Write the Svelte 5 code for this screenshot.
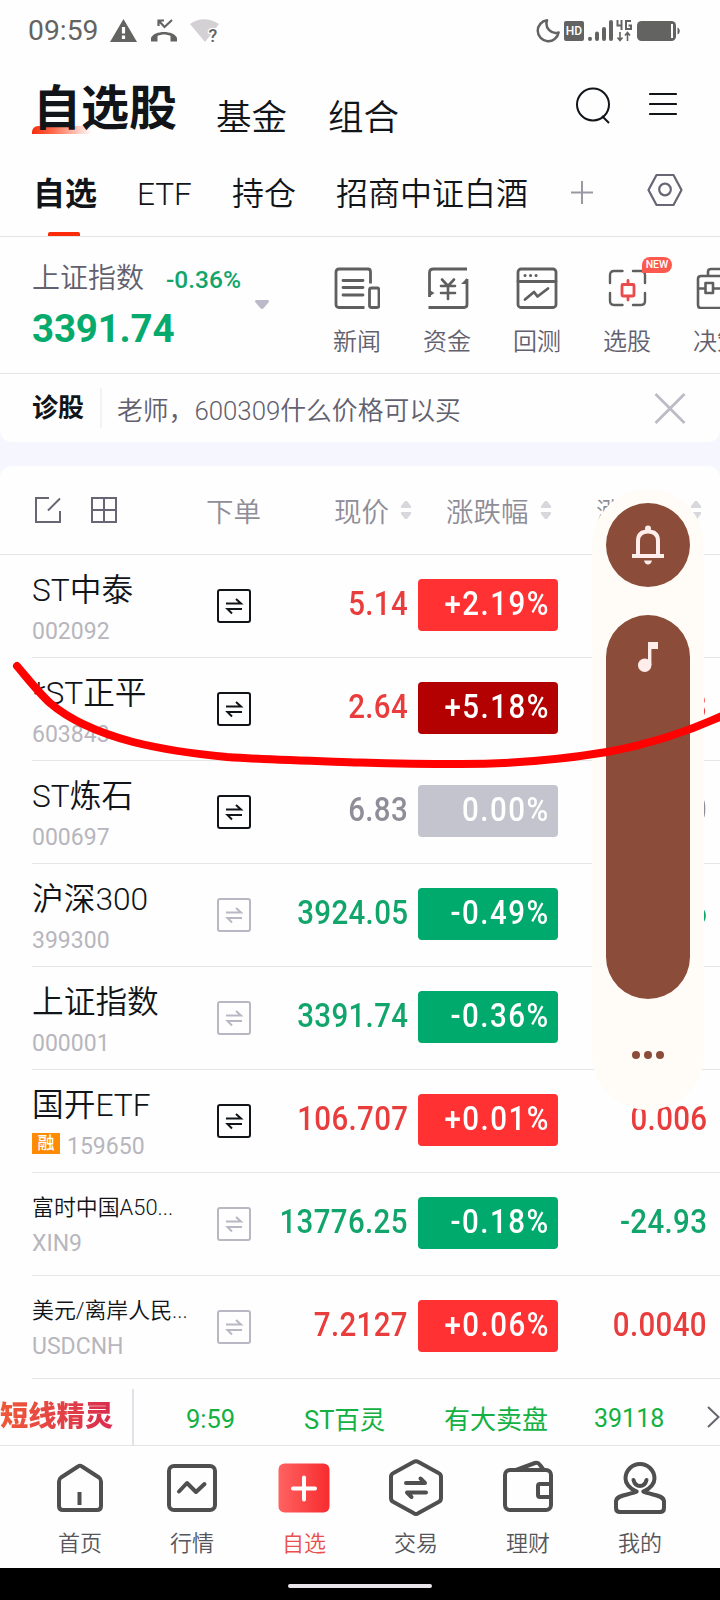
<script lang="ts">
	type Trend = 'up' | 'down' | 'flat' | 'surge';

	interface Stock {
		name: string;
		code: string;
		price: string;
		percent: string;
		change: string;
		trend: Trend;
		tradable: boolean;
		margin?: boolean;
		small?: boolean;
	}

	const stocks: Stock[] = [
		{ name: 'ST中泰', code: '002092', price: '5.14', percent: '+2.19%', change: '0.11', trend: 'up', tradable: true },
		{ name: '*ST正平', code: '603843', price: '2.64', percent: '+5.18%', change: '0.13', trend: 'surge', tradable: true },
		{ name: 'ST炼石', code: '000697', price: '6.83', percent: '0.00%', change: '0.00', trend: 'flat', tradable: true },
		{ name: '沪深300', code: '399300', price: '3924.05', percent: '-0.49%', change: '-19.36', trend: 'down', tradable: false },
		{ name: '上证指数', code: '000001', price: '3391.74', percent: '-0.36%', change: '-12.21', trend: 'down', tradable: false },
		{ name: '国开ETF', code: '159650', price: '106.707', percent: '+0.01%', change: '0.006', trend: 'up', tradable: true, margin: true },
		{ name: '富时中国A50...', code: 'XIN9', price: '13776.25', percent: '-0.18%', change: '-24.93', trend: 'down', tradable: false, small: true },
		{ name: '美元/离岸人民...', code: 'USDCNH', price: '7.2127', percent: '+0.06%', change: '0.0040', trend: 'up', tradable: false, small: true }
	];

	const tools = [
		{ id: 'news', label: '新闻' },
		{ id: 'funds', label: '资金' },
		{ id: 'backtest', label: '回测' },
		{ id: 'picker', label: '选股' },
		{ id: 'decision', label: '决策' }
	];

	const navItems = [
		{ id: 'home', label: '首页' },
		{ id: 'market', label: '行情' },
		{ id: 'watch', label: '自选' },
		{ id: 'trade', label: '交易' },
		{ id: 'wealth', label: '理财' },
		{ id: 'mine', label: '我的' }
	];

	let active = $state('watch');
</script>

{#snippet sorter()}
	<svg class="sorter" width="10" height="18" viewBox="0 0 10 18">
		<path d="M4 0h2l4 5v2H0V5zM0 11h10v2l-4 5H4l-4-5z" fill="#d8d8dc" />
	</svg>
{/snippet}

<div class="screen">
	<div class="status-bar">
		<span class="clock">09:59</span>
		<svg class="warn" width="27" height="23" viewBox="0 0 27 23">
			<path d="M13.5 0 27 23H0z" fill="#636462" />
			<path d="M13.5 8v6.500M13.500 16.500v3.500" stroke="#fff" stroke-width="3.200" />
		</svg>
		<svg class="missed" width="26" height="23" viewBox="0 0 26 23" fill="none" stroke="#636462">
			<path d="M7.500 7V1.500H13M8 2l5.500 6L21 1" stroke-width="2.200" />
			<path d="M0 19c3-8 23-8 26 0v3.500h-6.500V17c-4-2-9-2-13 0v5.500H0z" fill="#636462" stroke="none" />
		</svg>
		<svg class="wifi" width="30" height="24" viewBox="0 0 30 24">
			<path d="M0 5C8-1.500 20-1.500 29 5L15 23z" fill="#d3d1d4" />
			<text x="18.500" y="22.500" font-size="18" font-weight="500" fill="#636462" stroke="#fff" stroke-width="2.500" paint-order="stroke">?</text>
		</svg>
		<span class="spacer"></span>
		<svg class="moon" width="24" height="24" viewBox="0 0 24 24">
			<path d="M11 1.300A10.500 10.500 0 1 0 22.600 13.500C15.500 16 8.500 9 11 1.300z" fill="none" stroke="#636462" stroke-width="2.500" stroke-linejoin="round" />
		</svg>
		<span class="hd">HD</span>
		<svg class="signal" width="25" height="21" viewBox="0 0 25 21" stroke="#636462" stroke-width="4" stroke-linecap="round">
			<path d="M2 18.800v.2M9 13.500V19M16 9v10M23 2v17" />
		</svg>
		<svg class="lte" width="16" height="22" viewBox="0 0 16 22" fill="none" stroke="#636462" stroke-width="2">
			<path d="M1.500 0v5.500h5M5.500 0v10M15 1h-5v8h5V5.500h-2.500" />
			<path d="M4 12v8M1.500 17.500 4 20.500l2.500-3M11.500 21v-8M9 15.500l2.500-3 2.500 3" stroke-width="1.600" />
		</svg>
		<svg class="battery" width="43" height="20" viewBox="0 0 43 20">
			<rect x="0" y="0" width="39" height="20" rx="4.500" fill="#636462" />
			<rect x="34" y="3" width="2" height="14" fill="#fff" />
			<path d="M40.500 6.500c3 1 3 6 0 7z" fill="#636462" />
		</svg>
	</div>

	<header class="top-tabs">
		<h1>自选股</h1>
		<span class="fund">基金</span>
		<span class="combo">组合</span>
		<span class="spacer"></span>
		<svg class="search" width="36" height="38" viewBox="0 0 36 38" fill="none" stroke="#111418" stroke-width="2">
			<circle cx="17" cy="17.500" r="16" />
			<path d="m26 29 7 7" />
		</svg>
		<svg class="menu" width="28" height="24" viewBox="0 0 28 24" stroke="#111418" stroke-width="2.200" stroke-linecap="round">
			<path d="M1 2h26M1 12h26M1 22h26" />
		</svg>
	</header>

	<nav class="groups">
		<span class="group selected">自选</span>
		<span class="group etf">ETF</span>
		<span class="group hold">持仓</span>
		<span class="group">招商中证白酒</span>
		<svg class="plus" width="22" height="23" viewBox="0 0 22 23" stroke="#9b98a3" stroke-width="2">
			<path d="M0 11.500h22M11 0v23" />
		</svg>
		<svg class="settings" width="36" height="34" viewBox="0 0 36 34" fill="none" stroke="#686675" stroke-width="2.200" stroke-linejoin="round">
			<path d="M9.500 2h17L34.500 17l-8 15h-17L1.500 17z" />
			<circle cx="18" cy="16.500" r="5.800" />
		</svg>
	</nav>

	<section class="market">
		<div class="index">
			<div class="index-head">
				<span class="index-name">上证指数</span>
				<span class="index-percent">-0.36%</span>
			</div>
			<div class="index-value">3391.74</div>
		</div>
		<svg class="caret" width="14" height="9" viewBox="0 0 14 9"><path d="M1 0h12q2 1 0 3L8.500 8.300q-1.500 1.200-3 0L1 3Q-1 1 1 0z" fill="#bcb9c8" /></svg>
		<div class="tools">
			{#each tools as tool (tool.id)}
				<div class="tool">
					<svg width="46" height="42" viewBox="0 0 46 42" fill="none" stroke="#5f5f5f" stroke-width="2.800" stroke-linecap="round" stroke-linejoin="round">
						{#if tool.id === 'news'}
							<path d="M30.500 40.500H5q-3 0-3-3V5q0-3 3-3h29q2.500 0 2.500 3v11.500" stroke-linecap="butt" />
							<path d="M9 13.500h20M9 20.500h20M9 28h20" />
							<rect x="35.500" y="21" width="9.500" height="19.500" rx="2" />
						{:else if tool.id === 'funds'}
							<path d="M43 2H9.500Q5.500 2 5.500 6v24M4.500 40.500H40q3 0 3-3V12" stroke-linecap="butt" />
							<path d="M5.500 29v-6l5 3-6 4zM43 11v6h-6z" fill="#5f5f5f" stroke="none" />
							<path d="m18 12.500 6 6.500 6-6.500M17 19h14M17 26h14M24 19v13" stroke-width="2.600" />
						{:else if tool.id === 'backtest'}
							<rect x="4" y="2" width="38" height="38.500" rx="3" />
							<path d="M4 14.500h38M11 32.500l9-7.500 3.500 4.500 10.500-8" />
							<path d="M11 8.500h.1M16.500 8.500h.1M22 8.500h.1" stroke-width="3" />
						{:else if tool.id === 'picker'}
							<path d="M6 16V8q0-4 4-4h8.500M29 4h8q4 0 4 4v8M41 26v8q0 4-4 4h-8M18.500 38H10q-4 0-4-4v-8" stroke-width="2.400" />
							<path d="M24 13.500v4M24 29v4M19 17.500h10q1 0 1 1v9.500q0 1-1 1H19q-1 0-1-1v-9.500q0-1 1-1z" stroke="#ea4a49" />
						{:else}
							<path d="M46 9H7Q4 9 4 12v26q0 3 3 3h39M4 21.500h7.500M19 21.500h16M11.500 16H19v10h-7.500zM14 8.500V5q0-3 3-3h28" stroke-width="2.600" />
						{/if}
					</svg>
					<span>{tool.label}</span>
					{#if tool.id === 'picker'}<b class="new">NEW</b>{/if}
				</div>
			{/each}
		</div>
	</section>

	<section class="ask">
		<strong>诊股</strong>
		<span class="question">老师，600309什么价格可以买</span>
		<svg class="close" width="32" height="31" viewBox="0 0 32 31" stroke="#bcbbc6" stroke-width="2.800">
			<path d="m1.500 1 29 29M30.500 1l-29 29" />
		</svg>
	</section>

	<main class="quotes">
		<div class="quotes-head">
			<div class="head-icons">
				<svg width="26" height="26" viewBox="0 0 26 26" fill="none" stroke="#686675" stroke-width="2">
					<path d="M14 1H1v24h24V14M13 13.500 25 1.500" />
				</svg>
				<svg width="26" height="26" viewBox="0 0 26 26" fill="none" stroke="#686675" stroke-width="2">
					<path d="M1 1h24v24H1zM1 13h24M13 1v24" />
				</svg>
			</div>
			<span class="head-order">下单</span>
			<span class="head-price">现价{@render sorter()}</span>
			<span class="head-percent">涨跌幅{@render sorter()}</span>
			<span class="head-change">涨跌额{@render sorter()}</span>
		</div>

		{#each stocks as stock (stock.code)}
			<div class="row {stock.trend}">
				<div class="ident">
					<div class="name" class:small={stock.small}>{stock.name}</div>
					<div class="code">
						{#if stock.margin}<i class="margin">融</i>{/if}<span>{stock.code}</span>
					</div>
				</div>
				<svg class="swap" class:muted={!stock.tradable} width="34" height="34" viewBox="0 0 34 34" fill="none" stroke="currentColor" stroke-width="2">
					<rect x="1" y="1" width="32" height="32" rx="2" />
					<path d="M9 14.500h15l-5-4.500M25 20H10.500l4.500 4.500" />
				</svg>
				<div class="price"><span class="num">{stock.price}</span></div>
				<div class="percent"><span class="num">{stock.percent}</span></div>
				<div class="change"><span class="num">{stock.change}</span></div>
			</div>
		{/each}
	</main>

	<section class="ticker">
		<div class="ticker-title"><span>短线精灵</span></div>
		<span class="ticker-time">9:59</span>
		<span class="ticker-name">ST百灵</span>
		<span class="ticker-event">有大卖盘</span>
		<span class="ticker-amount">39118</span>
		<svg class="more" width="13" height="22" viewBox="0 0 13 22" fill="none" stroke="#67656e" stroke-width="2">
			<path d="m1 1 10.500 10L1 21" />
		</svg>
	</section>

	<nav class="bottom-nav">
		{#each navItems as item (item.id)}
			<button class:active={item.id === active} onclick={() => (active = item.id)}>
				<svg width="58" height="60" viewBox="0 0 58 60" fill="none" stroke="#4f4f4f" stroke-width="4" stroke-linejoin="round" stroke-linecap="round">
					{#if item.id === 'home'}
						<path d="M27 8.500q2-1.500 4 0l17 11q2 1.500 2 4V48q0 4-4 4H12q-4 0-4-4V23.500q0-2.500 2-4z" />
						<path d="M28.500 34v13" stroke-linecap="butt" />
					{:else if item.id === 'market'}
						<rect x="6" y="8" width="46" height="44" rx="5" />
						<path d="m16 33.500 8-8.500 9 9 8.500-8" />
					{:else if item.id === 'watch'}
						<defs>
							<linearGradient id="watch-fill"><stop offset="0" stop-color="#ff6261" /><stop offset="1" stop-color="#f72c2f" /></linearGradient>
						</defs>
						<rect x="3.500" y="5.500" width="51" height="49" rx="6" fill="url(#watch-fill)" stroke="none" />
						<path d="M18 30.500h22M29 19.500v22" stroke="#fff" />
					{:else if item.id === 'trade'}
						<path d="M26.500 4q2.500-1.500 5 0l20 11q2.500 1 2.500 4v21q0 3-2.500 4l-20 11q-2.500 2-5 0l-20-11Q4 43 4 40V19q0-3 2.500-4z" />
						<path d="M19 25h19l-4.500-4.500M39 34.500H20l4.500 4.500" />
					{:else if item.id === 'wealth'}
						<rect x="6" y="12" width="46" height="40" rx="5" />
						<path d="M52 26H41q-2 0-2 2v9q0 2 2 2h11M17 12l19-7q3-1 5 2l3 4" />
					{:else}
						<path d="M25.500 33.500C18 30.500 14.500 25 14.500 20.500a14.500 14.500 0 0 1 29 0c0 4.500-3.500 10-11 13" />
						<path d="M25.500 33.500C19 37 5 36.500 5 43.500V50q0 4 4 4h40q4 0 4-4v-6.500c0-7-14-6.500-20.500-10" />
						<path d="M22.500 22c2 8 11 8 13 0" />
					{/if}
				</svg>
				<span>{item.label}</span>
			</button>
		{/each}
	</nav>

	<div class="gesture-bar"><i></i></div>

	<aside class="volume">
		<div class="ring">
			<svg width="32" height="40" viewBox="0 0 32 40" fill="#ffedeb">
				<path d="M6 30V16q0-9.500 10-9.500T26 16v14" fill="none" stroke="#ffedeb" stroke-width="4" />
				<circle cx="16" cy="3.500" r="3" />
				<path d="M0 29h32v4H0zM12 35.500h8q-1 4-4 4t-4-4z" />
			</svg>
		</div>
		<div class="slider">
			<svg width="20" height="30" viewBox="0 0 20 30" fill="#ffedeb">
				<circle cx="6.700" cy="23.300" r="6.700" />
				<path d="M10 0h10v7h-6.600v16H10z" />
			</svg>
		</div>
		<div class="dots"><i></i><i></i><i></i></div>
	</aside>

	<svg class="stroke" width="720" height="130" viewBox="0 0 720 130">
		<path d="M17 16C28 29 39 43 50 53C72 72 103 84 133 92C165 100 195 104 227 107C270 110 315 111 360 112.500C395 113.500 425 114 460 114C520 114 565 109 607 102C650 94 687 82 724 65" fill="none" stroke="#ff0101" stroke-width="8" stroke-linecap="round" />
	</svg>
</div>

<style>
	:global(body) {
		background: #fff;
	}

	.screen {
		position: relative;
		width: 720px;
		height: 1600px;
		overflow: hidden;
		background: #fefefe;
		color: #111418;
		font-family: Roboto, 'Noto Sans CJK SC', sans-serif;
		white-space: nowrap;
	}

	.screen * {
		box-sizing: border-box;
	}

	svg {
		display: block;
		flex: none;
	}

	.spacer {
		flex: 1;
	}

	.status-bar {
		display: flex;
		align-items: center;
		height: 61px;
		padding: 0 40px 0 28px;
		color: #636462;
	}

	.clock {
		width: 82px;
		font-size: 28.300px;
		line-height: 60px;
	}

	.missed {
		margin-left: 14px;
	}

	.wifi {
		margin-left: 13px;
		overflow: visible;
	}

	.hd {
		width: 20px;
		margin: 0 4px;
		border-radius: 2px;
		background: #636462;
		color: #fff;
		font-size: 12px;
		font-weight: 500;
		line-height: 20px;
		text-align: center;
	}

	.lte {
		margin: 0 5px 0 3px;
	}

	.top-tabs {
		display: flex;
		align-items: center;
		height: 96px;
		padding: 0 42px 0 33px;
	}

	h1 {
		position: relative;
		z-index: 0;
		width: 183px;
		margin: 0;
		font-size: 48px;
		font-weight: 700;
		line-height: 96px;
	}

	h1::after {
		content: '';
		position: absolute;
		z-index: -1;
		left: -1px;
		top: 65px;
		width: 60px;
		height: 8px;
		border-radius: 6px 0 0;
		background: linear-gradient(90deg, #f72c0c, #ff6a4c 35%, #fff);
	}

	.fund,
	.combo {
		margin-top: 17px;
		font-size: 35.500px;
		font-weight: 350;
		line-height: 40px;
	}

	.combo {
		margin-left: 41px;
	}

	.search {
		margin: -7px 37px 0 0;
	}

	.menu {
		margin: -10px 1px 0 0;
	}

	.groups {
		display: flex;
		align-items: center;
		height: 80px;
		padding: 0 37px 5px 33px;
		border-bottom: 1px solid #e4e4e6;
	}

	.group {
		font-size: 32px;
		font-weight: 350;
		line-height: 75px;
	}

	.group.selected {
		position: relative;
		width: 64px;
		margin-right: 40px;
		font-weight: 700;
	}

	.selected::after {
		content: '';
		position: absolute;
		left: 15px;
		bottom: -4px;
		width: 32px;
		height: 4px;
		border-radius: 2px 2px 0 0;
		background: #fa2c0a;
	}

	.etf {
		width: 95px;
		font-size: 31.500px;
	}

	.hold {
		margin-right: 40px;
	}

	.plus {
		margin: -3px 0 0 43px;
	}

	.settings {
		margin: -8px 0 0 auto;
	}

	.market {
		display: flex;
		height: 137px;
		border-bottom: 1px solid #e4e4e6;
	}

	.index {
		flex: none;
		width: 255px;
		padding: 22px 0 0 32px;
	}

	.index-head {
		display: flex;
		align-items: center;
		height: 40px;
	}

	.index-name {
		width: 134px;
		color: #62606e;
		font-size: 28px;
		font-weight: 350;
		line-height: 36px;
	}

	.index-percent {
		color: #12a56b;
		font-size: 24.500px;
		font-weight: 500;
	}

	.index-value {
		color: #05aa6c;
		font-size: 38.500px;
		font-weight: 700;
		letter-spacing: -0.2px;
		line-height: 60px;
	}

	.caret {
		margin-top: 63px;
	}

	.tools {
		display: flex;
		margin-left: 43px;
	}

	.tool {
		position: relative;
		width: 90px;
		flex: none;
		padding-top: 30px;
	}

	.tool svg {
		margin: 0 auto;
	}

	.tool span {
		display: block;
		margin-top: 13px;
		color: #62606e;
		font-size: 24px;
		font-weight: 350;
		line-height: 40px;
		text-align: center;
	}

	.new {
		position: absolute;
		left: 60px;
		top: 20px;
		width: 30px;
		border-radius: 8px 8px 8px 1px;
		background: #fc594f;
		color: #fff;
		font-size: 10.500px;
		font-weight: 500;
		line-height: 16px;
		text-align: center;
	}

	.ask {
		position: relative;
		z-index: 1;
		display: flex;
		align-items: center;
		height: 68px;
		padding: 0 34px 0 32px;
		border-radius: 0 0 12px 12px;
		background: #fefefe;
		box-shadow: 0 12px 0 #f6f6fe;
	}

	.ask strong {
		width: 70px;
		border-right: 2px solid #f6f1f4;
		font-size: 26px;
		font-weight: 700;
		line-height: 40px;
	}

	.question {
		margin-left: 15px;
		color: #62606e;
		font-size: 25.800px;
		font-weight: 350;
	}

	.close {
		margin-left: auto;
	}

	.quotes {
		position: relative;
		margin-top: 24px;
		border-radius: 12px 12px 0 0;
		background: #fefefe;
		box-shadow: 0 -12px 0 12px #f6f6fe, 0 -24px 0 12px #f6f6fe;
		clip-path: inset(-24px 0 0);
	}

	.quotes-head {
		display: flex;
		align-items: center;
		height: 89px;
		padding-left: 35px;
		border-bottom: 1px solid #e4e4e6;
		color: #8f8d98;
		font-size: 27.500px;
		font-weight: 350;
	}

	.quotes-head span {
		display: flex;
		align-items: center;
	}

	.head-icons {
		display: flex;
		gap: 30px;
		width: 171px;
	}

	.head-order {
		width: 128px;
	}

	.head-price {
		width: 112px;
	}

	.head-percent {
		width: 150px;
	}

	.head-change {
		width: 105px;
		justify-content: space-between;
	}

	.sorter {
		margin-left: 12px;
	}

	.head-change .sorter {
		margin-left: 0;
	}

	.row {
		display: flex;
		align-items: center;
		height: 103px;
		margin-left: 32px;
		border-bottom: 1px solid #e6e6e9;
		color: #e93c3c;
	}

	.ident {
		width: 185px;
		padding-top: 6px;
		color: #111418;
	}

	.name {
		height: 45px;
		font-size: 31.700px;
		font-weight: 350;
		line-height: 42px;
	}

	.name.small {
		height: 42px;
		font-size: 21.900px;
		line-height: 38px;
		margin-top: -4px;
	}

	.code {
		display: flex;
		align-items: center;
		color: #b7b6bd;
		font-size: 23px;
		font-weight: 450;
		line-height: 34px;
	}

	.small + .code {
		margin-top: -4px;
	}

	.margin {
		width: 28px;
		height: 21px;
		margin: -7px 7px 0 0;
		background: #ff8a04;
		color: #fff;
		font-size: 17px;
		font-style: normal;
		font-weight: 500;
		line-height: 21px;
		text-align: center;
	}

	.swap {
		color: #111418;
	}

	.swap.muted {
		color: #b9b7c3;
	}

	.num {
		display: inline-block;
		font-size: 33.500px;
		font-weight: 500;
		letter-spacing: 0.4px;
		transform: scaleX(0.88);
		transform-origin: right center;
	}

	.price {
		width: 157px;
		margin-top: -5px;
		text-align: right;
	}

	.percent {
		width: 140px;
		height: 52px;
		margin: -3px 0 0 10px;
		padding-right: 8px;
		border-radius: 4px;
		background: #ff3133;
		color: #fff;
		line-height: 50px;
		text-align: right;
	}

	.percent .num {
		letter-spacing: 1.700px;
	}

	.change {
		width: 149px;
		margin-top: -5px;
		text-align: right;
	}

	.surge .percent {
		background: #b30000;
	}

	.flat {
		color: #8f8d98;
	}

	.flat .percent {
		background: #c4c4ce;
	}

	.down {
		color: #12a56b;
	}

	.down .percent {
		background: #00aa6c;
	}

	.ticker {
		display: flex;
		align-items: center;
		height: 67px;
		border-bottom: 1px solid #e4e4e6;
		color: #12b142;
		font-size: 26px;
	}

	.ticker-title {
		width: 134px;
		margin-top: 10px;
		border-right: 2px solid #e2e2e9;
		font-size: 28.300px;
		font-weight: 900;
		line-height: 56px;
	}

	.ticker-title span {
		background: linear-gradient(90deg, #ef5a38, #d92c50);
		background-clip: text;
		color: transparent;
	}

	.ticker-time,
	.ticker-name,
	.ticker-event,
	.ticker-amount {
		margin-top: 10px;
	}

	.ticker-time {
		box-sizing: content-box;
		width: 118px;
		padding: 3px 0 0 52px;
		font-size: 25.500px;
	}

	.ticker-name {
		width: 140px;
		font-size: 25.500px;
	}

	.ticker-event {
		width: 150px;
	}

	.ticker-amount {
		padding-top: 3px;
		font-size: 25px;
	}

	.more {
		margin: 9px 0 0 auto;
	}

	.bottom-nav {
		display: flex;
		height: 122px;
		padding: 0 24px;
		background: #fefefe;
	}

	.bottom-nav button {
		display: flex;
		flex-direction: column;
		align-items: center;
		justify-content: flex-start;
		gap: 11px;
		width: 112px;
		padding: 12px 0 0;
		border: 0;
		background: none;
		color: #55555a;
		font: inherit;
		font-size: 22px;
		font-weight: 350;
		line-height: 30px;
	}

	.bottom-nav .active {
		color: #e9504a;
	}

	.gesture-bar {
		display: flex;
		justify-content: center;
		height: 32px;
		padding-top: 16px;
		background: #000;
	}

	.gesture-bar i {
		width: 144px;
		height: 4px;
		border-radius: 2px;
		background: #e8e6e8;
	}

	/* system volume panel floating over the list */
	.volume {
		position: absolute;
		left: 592px;
		top: 489px;
		width: 112px;
		height: 621px;
		padding: 14px;
		border-radius: 56px;
		background: #fffcf7;
	}

	.ring {
		display: flex;
		align-items: center;
		justify-content: center;
		height: 84px;
		border-radius: 50%;
		background: #8b4d3a;
	}

	.slider {
		height: 384px;
		margin-top: 28px;
		padding: 27px 0 0 32px;
		border-radius: 42px;
		background: #8b4d3a;
	}

	.dots {
		display: flex;
		justify-content: center;
		gap: 4px;
		margin-top: 52px;
	}

	.dots i {
		width: 8px;
		height: 8px;
		border-radius: 50%;
		background: #8b4d3a;
	}

	.stroke {
		position: absolute;
		left: 0;
		top: 650px;
		pointer-events: none;
	}
</style>
